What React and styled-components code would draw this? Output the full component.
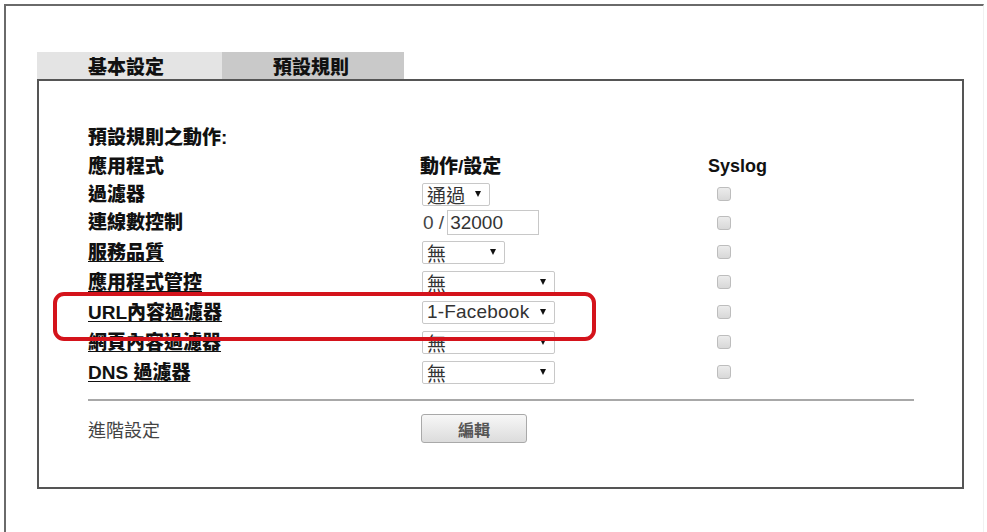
import React from 'react';
import styled, { createGlobalStyle } from 'styled-components';

const GlobalStyle = createGlobalStyle`
  html, body {
    margin: 0;
    padding: 0;
    background: #fff;
    overflow: hidden;
  }
  body {
    font-family: "Liberation Sans", "Noto Sans CJK TC", Arial, sans-serif;
  }
`;

const Frame = styled.div`
  margin: 4px 0 0 4px;
  width: 980px;
  height: 528px;
  border-top: 2px solid #6a6a6a;
  border-left: 2px solid #6a6a6a;
  border-right: 1px solid #f1f1f1;
  padding: 46px 0 0 31px;
  box-sizing: border-box;
`;

const Tabs = styled.div`
  display: flex;
  height: 27px;
`;

const Tab = styled.div`
  width: ${p => p.$w}px;
  background: ${p => (p.$active ? '#c9c9c9' : '#e4e4e4')};
  display: flex;
  align-items: center;
  padding-left: ${p => p.$pad}px;
  box-sizing: border-box;
  font-size: 19px;
  font-weight: 900;
  color: #111;
  font-family: "Noto Sans CJK TC", sans-serif;
  line-height: 1;
`;

const Panel = styled.div`
  position: relative;
  width: 927px;
  height: 410px;
  border: 2px solid #555;
  box-sizing: border-box;
  padding: 41px 45px 0 49px;
`;

const Grid = styled.div`
  display: grid;
  grid-template-columns: 332px 288px 1fr;
  grid-template-rows: 30px 28px 28px 29px 30px 30px 30px 30px 30px;
  align-items: center;
`;

const Label = styled.div`
  grid-column: ${p => p.$col || 'auto'};
  font-family: "Liberation Sans", "Noto Sans CJK TC", sans-serif;
  font-size: ${p => p.$size || 19}px;
  font-weight: 900;
  color: #111;
  line-height: 1;
  text-decoration: ${p => (p.$link ? 'underline' : 'none')};
  text-underline-offset: 2px;
  white-space: nowrap;
`;

const Cell = styled.div`
  display: flex;
  align-items: center;
`;

const SelectBox = styled.div`
  width: ${p => p.$w}px;
  height: 23px;
  border: 1px solid #c8c8c8;
  border-radius: 2px;
  box-sizing: border-box;
  display: flex;
  align-items: center;
  justify-content: space-between;
  padding: 0 8px 0 4px;
  font-family: "Liberation Sans", "Noto Sans CJK TC", sans-serif;
  font-size: 19px;
  letter-spacing: 0.2px;
  color: #333;
  margin-left: 2px;
  background: #fff;
`;

const Arrow = styled.span`
  width: 0;
  height: 0;
  border-left: 3.5px solid transparent;
  border-right: 3.5px solid transparent;
  border-top: 6px solid #111;
`;

const Counter = styled.span`
  font-size: 19px;
  color: #444;
  margin-left: 3px;
  margin-right: 3px;
`;

const NumInput = styled.div`
  width: 92px;
  height: 25px;
  border: 1px solid #c8c8c8;
  box-sizing: border-box;
  padding-left: 2px;
  display: flex;
  align-items: center;
  font-size: 19px;
  color: #333;
`;

const Check = styled.span`
  width: 14px;
  height: 14px;
  margin-left: 9px;
  border: 1px solid #bdbdbd;
  border-radius: 3px;
  box-sizing: border-box;
  background: linear-gradient(#ececec, #d8d8d8);
`;

const Divider = styled.div`
  margin-top: 12px;
  width: 826px;
  border-top: 2px solid #a8a8a8;
`;

const Footer = styled.div`
  display: grid;
  grid-template-columns: 332px auto;
  align-items: center;
  margin-top: 13px;
`;

const FooterLabel = styled.span`
  font-family: "Noto Sans CJK TC", sans-serif;
  font-size: 18px;
  color: #444;
  line-height: 1;
`;

const EditButton = styled.button`
  width: 106px;
  height: 29px;
  margin-left: 1px;
  border: 1px solid #a9a9a9;
  border-radius: 3px;
  background: linear-gradient(#f7f7f7, #dcdcdc);
  font-family: "Noto Sans CJK TC", sans-serif;
  font-size: 16px;
  font-weight: 700;
  color: #555;
  padding: 0;
`;

const Highlight = styled.div`
  position: absolute;
  left: 14px;
  top: 211px;
  width: 543px;
  height: 49px;
  border: 4px solid #d4131b;
  border-radius: 11px;
  box-sizing: border-box;
  pointer-events: none;
`;

const Select = ({ w, children }) => (
  <SelectBox $w={w}>
    <span>{children}</span>
    <Arrow />
  </SelectBox>
);

const rows = [
  { label: '過濾器', action: <Select w={68}>通過</Select> },
  {
    label: '連線數控制',
    action: (
      <>
        <Counter>0 /</Counter>
        <NumInput>32000</NumInput>
      </>
    ),
  },
  { label: '服務品質', link: true, action: <Select w={83}>無</Select> },
  { label: '應用程式管控', link: true, action: <Select w={133}>無</Select> },
  { label: 'URL內容過濾器', link: true, action: <Select w={133}>1-Facebook</Select> },
  { label: '網頁內容過濾器', link: true, action: <Select w={133}>無</Select> },
  { label: 'DNS 過濾器', link: true, action: <Select w={133}>無</Select> },
];

export default function App() {
  return (
    <>
      <GlobalStyle />
      <Frame>
        <Tabs>
          <Tab $w={185} $pad={51}>基本設定</Tab>
          <Tab $w={182} $pad={51} $active>預設規則</Tab>
        </Tabs>
        <Panel>
          <Grid>
            <Label $col="1 / -1">預設規則之動作:</Label>
            <Label>應用程式</Label>
            <Label>動作/設定</Label>
            <Label $size={18}>Syslog</Label>
            {rows.map(r => (
              <React.Fragment key={r.label}>
                <Label $link={r.link}>{r.label}</Label>
                <Cell>{r.action}</Cell>
                <Cell>
                  <Check />
                </Cell>
              </React.Fragment>
            ))}
          </Grid>
          <Divider />
          <Footer>
            <FooterLabel>進階設定</FooterLabel>
            <div>
              <EditButton>編輯</EditButton>
            </div>
          </Footer>
          <Highlight />
        </Panel>
      </Frame>
    </>
  );
}
